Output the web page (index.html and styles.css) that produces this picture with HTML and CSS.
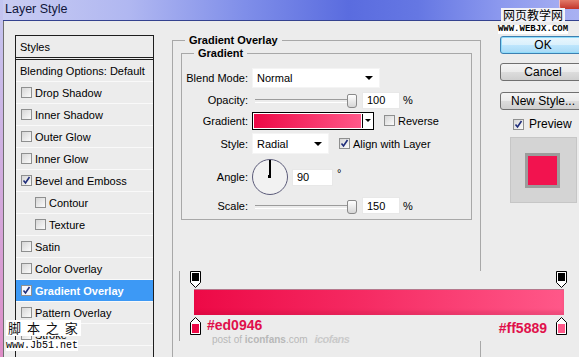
FILE: index.html
```html
<!DOCTYPE html>
<html lang="en">
  <head>
    <meta charset="UTF-8" />
    <meta name="viewport" content="width=device-width, initial-scale=1.0" />
    <title>Layer Style</title>
    <link rel="stylesheet" href="styles.css">
  </head>
  <body>
    <!-- the dialog window -->
    <div class="window">
      <!-- title bar -->
      <div class="title-bar">
        <span class="title">Layer Style</span>
        <span class="close"></span>
      </div>
      <div class="dialog">
        <!-- list of layer styles -->
        <ul class="styles-list">
          <li class="list-head">Styles</li>
          <li class="list-blend">Blending Options: Default</li>
          <li><span class="check"></span>Drop Shadow</li>
          <li><span class="check"></span>Inner Shadow</li>
          <li><span class="check"></span>Outer Glow</li>
          <li><span class="check"></span>Inner Glow</li>
          <li>
            <span class="check">
              <svg width="9" height="9" viewBox="0 0 9 9"><path d="M1.5 4.5l2 2.5l4-6" fill="none" stroke="#1f2d7a" stroke-width="1.6"/></svg>
            </span>Bevel and Emboss
          </li>
          <li class="sub"><span class="check"></span>Contour</li>
          <li class="sub"><span class="check"></span>Texture</li>
          <li><span class="check"></span>Satin</li>
          <li><span class="check"></span>Color Overlay</li>
          <li class="active">
            <span class="check">
              <svg width="9" height="9" viewBox="0 0 9 9"><path d="M1.5 4.5l2 2.5l4-6" fill="none" stroke="#1f2d7a" stroke-width="1.6"/></svg>
            </span>Gradient Overlay
          </li>
          <li><span class="check"></span>Pattern Overlay</li>
          <li><span class="check"></span>Stroke</li>
          <li></li>
        </ul>

        <!-- gradient overlay settings -->
        <fieldset class="group">
          <legend>Gradient Overlay</legend>
          <fieldset class="group inner">
            <legend>Gradient</legend>
            <div class="field field-blend">
              <label>Blend Mode:</label>
              <div class="select select-wide">Normal<span class="arrow"></span></div>
            </div>
            <div class="field field-opacity">
              <label>Opacity:</label>
              <div class="slider"></div>
              <div class="num">100</div>
              <span class="unit">%</span>
            </div>
            <div class="field field-gradient">
              <label>Gradient:</label>
              <div class="gradient-picker">
                <div class="gradient-fill"></div>
                <div class="gradient-drop"><span class="arrow small"></span></div>
              </div>
              <span class="check check-gap"></span>Reverse
            </div>
            <div class="field field-style">
              <label>Style:</label>
              <div class="select select-narrow">Radial<span class="arrow"></span></div>
              <span class="check check-gap">
                <svg width="9" height="9" viewBox="0 0 9 9"><path d="M1.5 4.5l2 2.5l4-6" fill="none" stroke="#1f2d7a" stroke-width="1.6"/></svg>
              </span>Align with Layer
            </div>
            <div class="field field-angle">
              <label>Angle:</label>
              <div class="dial"></div>
              <div class="num num-angle">90</div>
              <span class="degree">&deg;</span>
            </div>
            <div class="field field-scale">
              <label>Scale:</label>
              <div class="slider"></div>
              <div class="num">150</div>
              <span class="unit">%</span>
            </div>
          </fieldset>
        </fieldset>

        <!-- buttons and preview -->
        <div class="actions">
          <button class="btn btn-default">OK</button>
          <button class="btn btn-cancel">Cancel</button>
          <button class="btn btn-new">New Style...</button>
          <div class="preview-toggle">
            <span class="check">
              <svg width="9" height="9" viewBox="0 0 9 9"><path d="M1.5 4.5l2 2.5l4-6" fill="none" stroke="#1f2d7a" stroke-width="1.6"/></svg>
            </span>Preview
          </div>
          <div class="preview"><div class="swatch"></div></div>
        </div>
      </div>

      <!-- gradient editor pasted over the dialog -->
      <div class="gradient-editor">
        <div class="stops-top">
          <svg width="11" height="17" viewBox="0 0 11 17"><path d="M0.5 0.5h10v11l-5 5l-5-5z" fill="#fff" stroke="#000"/><rect x="2" y="2" width="7" height="8" fill="#000"/></svg>
          <svg width="11" height="17" viewBox="0 0 11 17"><path d="M0.5 0.5h10v11l-5 5l-5-5z" fill="#fff" stroke="#000"/><rect x="2" y="2" width="7" height="8" fill="#000"/></svg>
        </div>
        <div class="ramp"></div>
        <div class="stops-bottom">
          <svg width="11" height="18" viewBox="0 0 11 18"><path d="M5.5 0.5l5 5v12h-10v-12z" fill="#fff" stroke="#000"/><rect x="2" y="7" width="7" height="9" fill="#ed0946"/></svg>
          <div class="hex-left">
            <span class="hex">#ed0946</span>
            <span class="credit">post of <b>iconfans</b>.com <i class="logo">icofans</i></span>
          </div>
          <span class="hex hex-right">#ff5889</span>
          <svg class="stop-right" width="11" height="18" viewBox="0 0 11 18"><path d="M5.5 0.5l5 5v12h-10v-12z" fill="#fff" stroke="#000"/><rect x="2" y="7" width="7" height="9" fill="#ff5889"/></svg>
        </div>
      </div>

      <!-- site watermarks -->
      <div class="wm-top">
        <span class="wm-cn">网页教学网</span>
        <span class="wm-url">WWW.WEBJX.COM</span>
      </div>
      <div class="wm-bottom">
        <span class="wm-cn">脚 本 之 家</span>
        <span class="wm-url">www.Jb51.net</span>
      </div>
    </div>
  </body>
</html>
```

FILE: styles.css
```css
/* reset */
* {
  margin: 0;
  padding: 0;
  box-sizing: border-box;
}
body {
  font-family: "Liberation Sans", Arial, sans-serif;
  font-size: 11px;
  color: #000;
  background-color: #ececec;
}
/* window frame */
.window {
  position: relative;
  width: 579px;
  height: 357px;
  overflow: hidden;
  display: flex;
  flex-direction: column;
  padding-left: 3px;
  background: linear-gradient(#c3c6f1, #d4a6da 60%, #de8cc6);
}
.title-bar {
  height: 21px;
  flex-shrink: 0;
  display: flex;
  align-items: flex-start;
  padding-left: 2px;
  border-bottom: 1px solid #34428f;
  background: linear-gradient(90deg, #c9ccf2 0%, #b0b7f1 22%, #7f8ee9 42%, #5a6cdf 60%, #6577e3 72%, #8b98ee 86%, #a9b1f2 100%);
}
.title {
  font-size: 12.5px;
  line-height: 19px;
  color: #10163a;
}
.close {
  margin-left: auto;
  width: 20px;
  height: 9px;
  border-radius: 0 0 0 3px;
  background: linear-gradient(#e27a68, #c2352a);
  border-left: 1px solid #f2c0c0;
}
.dialog {
  flex: 1;
  min-height: 0;
  display: flex;
  align-items: flex-start;
  padding: 14px 0 0 11px;
  background-color: #ececec;
  border-left: 1px solid #6e6e6e;
}
/* styles list */
.styles-list {
  width: 139px;
  flex-shrink: 0;
  align-self: stretch;
  margin-bottom: -6px;
  list-style: none;
  border: 1px solid #1e1e1e;
  background-color: #ececec;
}
.styles-list li {
  height: 22px;
  display: flex;
  align-items: center;
  padding-left: 5px;
  border-bottom: 1px solid #f9f9f9;
}
.styles-list .list-head {
  height: 24px;
  padding-left: 4px;
  border-bottom: 3px double #1e1e1e;
}
.styles-list .list-blend {
  padding-left: 4px;
}
.styles-list .sub {
  padding-left: 19px;
}
.styles-list .active {
  background-color: #3d99f5;
  color: #fff;
  font-weight: bold;
}
/* checkbox */
.check {
  width: 11px;
  height: 11px;
  flex-shrink: 0;
  display: inline-flex;
  align-items: center;
  justify-content: center;
  margin-right: 3px;
  border: 1px solid #8e8f8f;
  background: linear-gradient(135deg, #d6d6d6, #fbfbfb);
}
.active .check {
  background: #f4f6ff;
}
.check-gap {
  margin-left: 10px;
}
/* gradient overlay group */
.group {
  width: 309px;
  flex-shrink: 0;
  min-width: 0;
  margin: -1px 0 -6px 18px;
  align-self: stretch;
  border: 1px solid #a8a8a8;
}
.group legend {
  margin-left: 12px;
  padding: 0 4px;
  font-weight: bold;
  line-height: 13px;
}
.group.inner {
  width: 291px;
  margin: 0 0 0 8px;
  padding: 8px 0 5px;
}
.field {
  display: flex;
  align-items: center;
}
.field label {
  width: 66px;
  margin-right: 4px;
  text-align: right;
}
.field-blend {
  height: 20px;
  margin-bottom: 3px;
}
.field-opacity {
  height: 18px;
  margin-bottom: 2px;
}
.field-gradient {
  height: 19px;
  margin-bottom: 3px;
}
.field-style {
  height: 21px;
  margin-bottom: 4px;
}
.field-angle {
  height: 38px;
  margin-bottom: 1px;
}
.field-scale {
  height: 17px;
}
/* dropdowns */
.select {
  height: 20px;
  display: flex;
  align-items: center;
  justify-content: space-between;
  padding: 0 6px 0 4px;
  background-color: #fff;
  border: 1px solid #f4f4f4;
}
.select-wide {
  width: 128px;
}
.select-narrow {
  width: 77px;
  height: 21px;
}
.arrow {
  width: 0;
  height: 0;
  border-left: 4px solid transparent;
  border-right: 4px solid transparent;
  border-top: 4px solid #000;
}
.arrow.small {
  border-left-width: 3px;
  border-right-width: 3px;
  border-top-width: 3px;
}
/* sliders */
.slider {
  position: relative;
  width: 105px;
  height: 14px;
  margin-right: 5px;
}
.slider::before {
  content: "";
  position: absolute;
  left: 3px;
  right: 2px;
  top: 6px;
  height: 2px;
  border-top: 1px solid #9c9c9c;
  border-bottom: 1px solid #fff;
}
.slider::after {
  content: "";
  position: absolute;
  right: 0;
  top: 1px;
  width: 8px;
  height: 12px;
  border: 1px solid #8a8a8a;
  border-radius: 2px 2px 3px 3px;
  background: linear-gradient(#fff, #d6d6d6);
}
.num {
  width: 38px;
  height: 17px;
  display: flex;
  align-items: center;
  padding-left: 4px;
  background-color: #fff;
  border: 1px solid #e8e8e8;
}
.num-angle {
  width: 41px;
}
.unit {
  margin-left: 3px;
}
.degree {
  margin: -8px 0 0 4px;
}
/* gradient swatch */
.gradient-picker {
  width: 122px;
  height: 18px;
  display: flex;
  padding: 1px 0 1px 1px;
  border: 1px solid #000;
  background-color: #fff;
}
.gradient-fill {
  flex: 1;
  background: linear-gradient(90deg, #ed0946, #ff5889);
}
.gradient-drop {
  width: 11px;
  display: flex;
  align-items: center;
  justify-content: center;
  margin-left: 1px;
  border-left: 1px solid #000;
}
/* angle dial */
.dial {
  position: relative;
  width: 36px;
  height: 36px;
  margin-right: 4px;
  border: 1.5px solid #5c5c7a;
  border-radius: 50%;
  background-color: #f2f2f2;
}
.dial::before {
  content: "";
  position: absolute;
  left: 16px;
  top: 0;
  width: 1.5px;
  height: 17px;
  background-color: #000;
}
.dial::after {
  content: "";
  position: absolute;
  left: 15px;
  top: 15px;
  width: 3px;
  height: 3px;
  background-color: #000;
}
/* buttons column */
.actions {
  width: 86px;
  flex-shrink: 0;
  margin-left: 19px;
  display: flex;
  flex-direction: column;
}
.btn {
  height: 18px;
  padding: 0;
  font-family: "Liberation Sans", Arial, sans-serif;
  font-size: 12px;
  line-height: 16px;
  color: #000;
  border: 1px solid #707070;
  border-radius: 3px;
  background: linear-gradient(#f4f4f4, #ebebeb 50%, #dddddd 50%, #cfcfcf);
}
.btn-default {
  margin-top: 1px;
  border-color: #3c7fb1;
  background: linear-gradient(#eaf6fd, #d9f0fc 50%, #bee6fd 50%, #a7d9f5);
  box-shadow: inset 0 0 0 1px #8fdcfa;
}
.btn-cancel {
  margin-top: 9px;
}
.btn-new {
  margin-top: 11px;
}
.preview-toggle {
  display: flex;
  align-items: center;
  height: 12px;
  margin: 8px 0 0 13px;
  font-size: 12px;
}
.preview-toggle .check {
  margin-right: 5px;
}
.preview {
  width: 67px;
  height: 66px;
  margin: 7px 0 0 10px;
  display: flex;
  align-items: center;
  justify-content: center;
  background-color: #d4d4d4;
  border: 1px solid #c6c6c6;
}
.swatch {
  width: 35px;
  height: 35px;
  margin-right: 3px;
  border: 3px solid #9c9c9c;
  background-color: #f2134f;
}
/* gradient editor overlay */
.gradient-editor {
  position: absolute;
  left: 179px;
  top: 271px;
  width: 400px;
  height: 70px;
  padding-left: 10px;
  border-left: 1px solid #a4a4a4;
  background-color: #ececec;
}
.stops-top {
  width: 377px;
  height: 16px;
  display: flex;
  justify-content: space-between;
}
.ramp {
  width: 370px;
  height: 26px;
  margin: 2px 0 0 4px;
  border-top: 1px solid #b5788c;
  background: linear-gradient(90deg, #ed0946, #f52a62 45%, #ff5889);
  box-shadow: inset 0 -4px 3px rgba(120, 0, 40, 0.12);
}
.stops-bottom {
  width: 377px;
  display: flex;
  align-items: flex-start;
  margin-top: 2px;
}
.hex-left {
  display: flex;
  flex-direction: column;
  margin-left: 6px;
}
.hex {
  font-size: 14px;
  font-weight: bold;
  line-height: 16px;
  color: #e0104b;
}
.credit {
  margin: 1px 0 0 5px;
  font-size: 10px;
  line-height: 10px;
  color: #b8b8b8;
  white-space: nowrap;
}
.credit .logo {
  margin-left: 4px;
  font-weight: bold;
  font-size: 11px;
  letter-spacing: -0.5px;
  color: #cacaca;
}
.hex-right {
  margin: 3px 0 0 auto;
}
.stop-right {
  margin-left: 9px;
}
/* watermarks */
.wm-top {
  position: absolute;
  left: 497px;
  top: 8px;
  width: 72px;
  display: flex;
  flex-direction: column;
  align-items: center;
}
.wm-top .wm-cn {
  padding: 0 2px;
  font-family: "Noto Sans CJK SC", sans-serif;
  font-size: 12px;
  line-height: 14px;
  background-color: #f2f2f8;
}
.wm-top .wm-url {
  margin-top: 3px;
  font-family: "Liberation Mono", monospace;
  font-size: 9px;
  font-weight: bold;
  line-height: 9px;
  background-color: #fff;
}
.wm-bottom {
  position: absolute;
  left: 6px;
  top: 320px;
  display: flex;
  flex-direction: column;
  align-items: flex-start;
  gap: 4px;
}
.wm-bottom .wm-cn {
  padding: 0 2px;
  font-family: "Noto Sans CJK SC", sans-serif;
  font-size: 13px;
  line-height: 16px;
  letter-spacing: 1.5px;
  color: #111;
  background-color: #fff;
}
.wm-bottom .wm-url {
  font-family: "Liberation Mono", monospace;
  font-size: 10px;
  line-height: 11px;
  background-color: #fff;
}
```
